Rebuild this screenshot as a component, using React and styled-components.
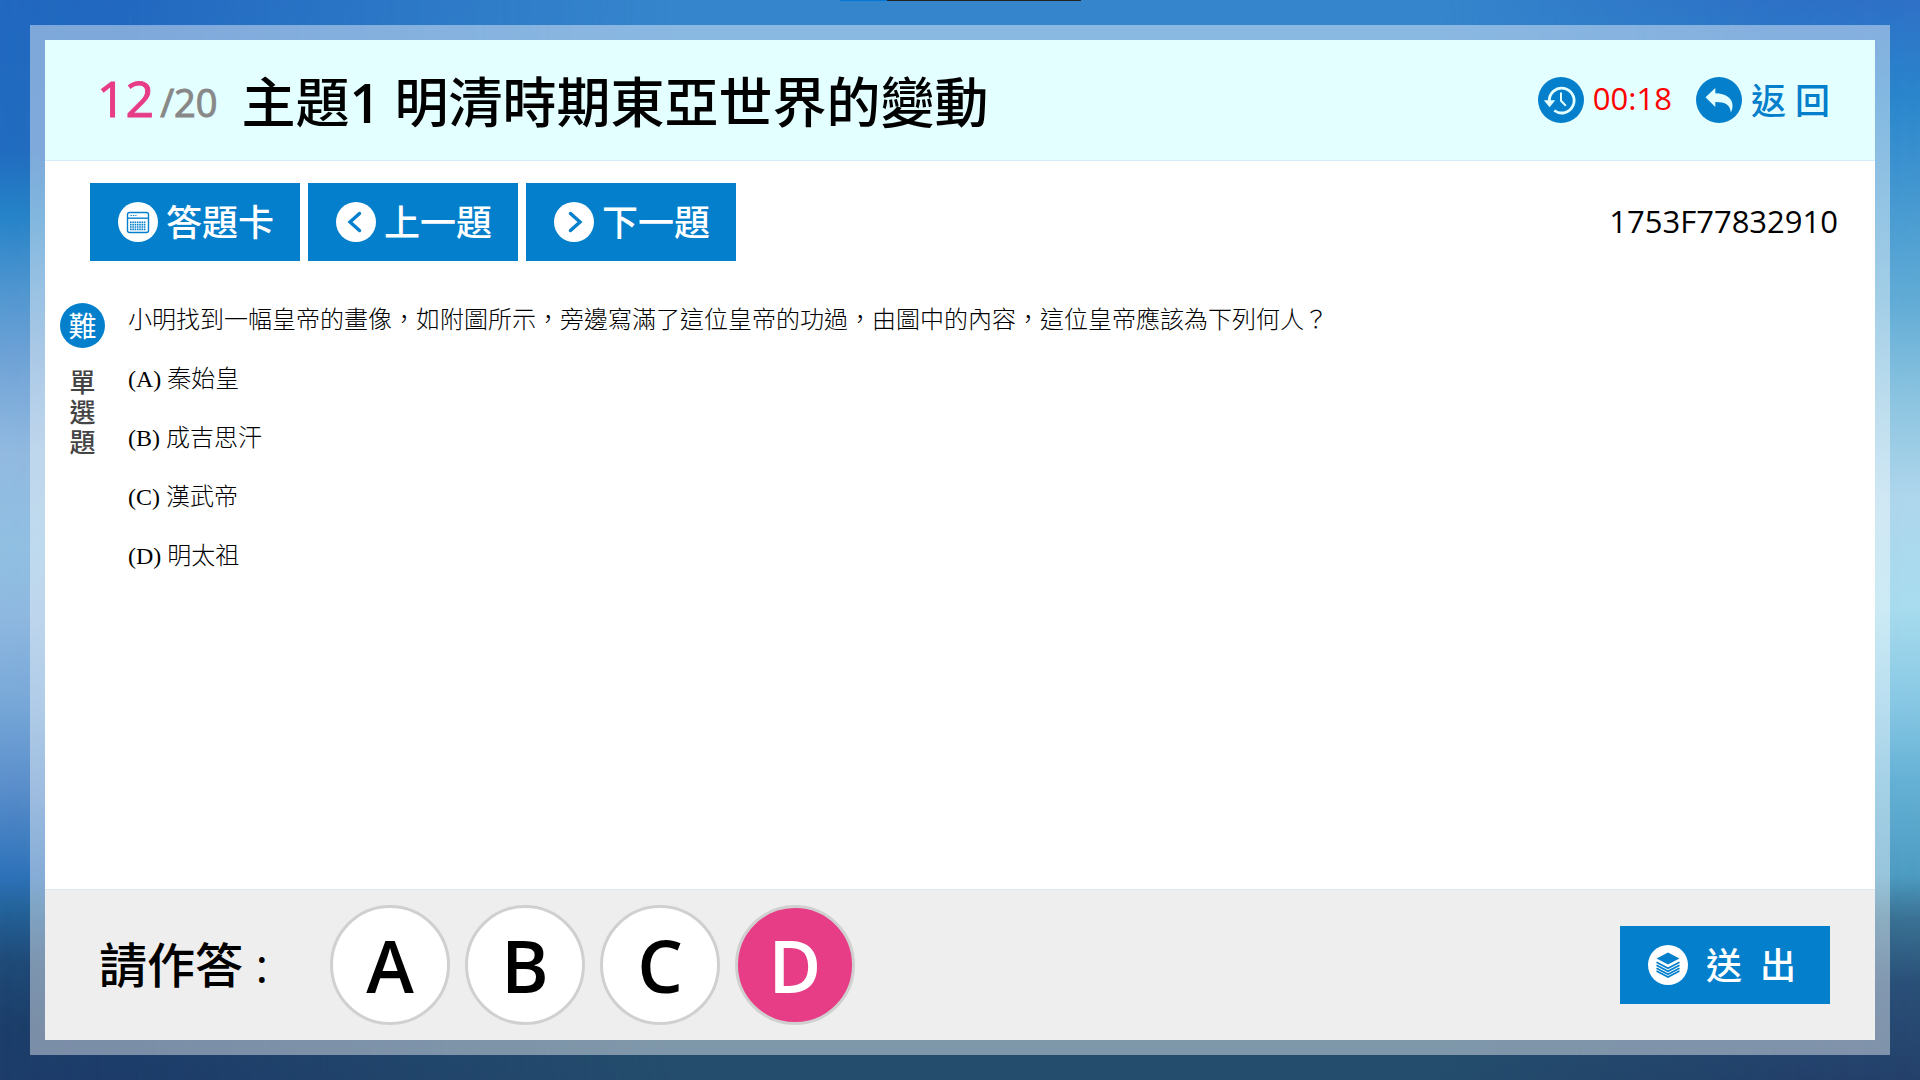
import React, { useState } from "react";
import styled, { createGlobalStyle, css } from "styled-components";

const CHOICES = ["A", "B", "C", "D"];

const OPTIONS = [
  { key: "A", text: "秦始皇" },
  { key: "B", text: "成吉思汗" },
  { key: "C", text: "漢武帝" },
  { key: "D", text: "明太祖" },
];

function CardIcon() {
  return (
    <svg width="40" height="40" viewBox="0 0 40 40" aria-hidden="true">
      <circle cx="20" cy="20" r="20" fill="#fff" />
      <rect x="9.5" y="10.5" width="21" height="20" rx="2" fill="none" stroke="#047fcc" strokeWidth="1.4" />
      <path d="M10 16.2h20" stroke="#047fcc" strokeWidth="1.4" />
      <path d="M12.5 13.5h6" stroke="#047fcc" strokeWidth="1.2" strokeDasharray="1.4 1" />
      <path d="M12 20.2h16M12 22.6h16M12 25h16M12 27.4h16" stroke="#047fcc" strokeWidth="1.6" strokeDasharray="1.6 0.7" />
    </svg>
  );
}

function ArrowIcon({ next }) {
  return (
    <svg width="40" height="40" viewBox="0 0 40 40" aria-hidden="true">
      <circle cx="20" cy="20" r="20" fill="#fff" />
      <path
        d={next ? "M16.5 11.5l9.5 8.5-9.5 8.5" : "M23.5 11.5l-9.5 8.5 9.5 8.5"}
        fill="none"
        stroke="#047fcc"
        strokeWidth="3.4"
        strokeLinecap="round"
      />
    </svg>
  );
}

function ClockIcon() {
  return (
    <svg width="46" height="46" viewBox="0 0 46 46" aria-hidden="true">
      <circle cx="23" cy="23" r="23" fill="#047fcc" />
      <path d="M11.3 24A12.4 12.4 0 1 1 16.3 33.5" fill="none" stroke="#e3ffff" strokeWidth="2.8" />
      <path d="M5.8 23.3h11.4l-5.6 7z" fill="#e3ffff" />
      <path d="M23 15.5v8.3l4.8 5" fill="none" stroke="#e3ffff" strokeWidth="2" />
    </svg>
  );
}

function BackIcon() {
  return (
    <svg width="46" height="46" viewBox="0 0 46 46" aria-hidden="true">
      <circle cx="23" cy="23" r="23" fill="#047fcc" />
      <path d="M9.5 20.2L19.3 11v5.2c10.5.3 17.2 5 17.2 12.2 0 3-.6 5-1.700 7-.3-7.600-5.500-10.600-15.500-10.500v5z" fill="#e3ffff" />
    </svg>
  );
}

function LayersIcon() {
  return (
    <svg width="40" height="40" viewBox="0 0 40 40" aria-hidden="true">
      <circle cx="20" cy="20" r="20" fill="#fff" />
      <path d="M20 7.5l11.5 6-11.5 6-11.5-6z" fill="#047fcc" />
      <path
        d="M8.5 17.3l11.5 6 11.5-6M8.5 20.3l11.5 6 11.5-6M8.5 23.3l11.5 6 11.5-6M8.5 26.1l11.5 6 11.5-6"
        fill="none"
        stroke="#047fcc"
        strokeWidth="1.7"
      />
    </svg>
  );
}

function App() {
  const [answer, setAnswer] = useState("D");

  return (
    <Page>
      <GlobalStyle />
      <TopTab />
      <Frame>
        <Header>
          <Counter>
            <strong>12</strong>
            <span>/20</span>
          </Counter>
          <Title>主題<b>1</b> 明清時期東亞世界的變動</Title>
          <Timer>
            <ClockIcon />
            <time>00:18</time>
          </Timer>
          <BackLink href="#back">
            <BackIcon />
            <span>返 回</span>
          </BackLink>
        </Header>
        <Toolbar>
          <BlueButton type="button"><CardIcon /><span>答題卡</span></BlueButton>
          <BlueButton type="button"><ArrowIcon /><span>上一題</span></BlueButton>
          <BlueButton type="button"><ArrowIcon next /><span>下一題</span></BlueButton>
          <Code>1753F77832910</Code>
        </Toolbar>
        <Main>
          <Side>
            <Level>難</Level>
            <Kind>單選題</Kind>
          </Side>
          <Question>
            <p>小明找到一幅皇帝的畫像，如附圖所示，旁邊寫滿了這位皇帝的功過，由圖中的內容，這位皇帝應該為下列何人？</p>
            {OPTIONS.map((o) => (
              <p key={o.key}>({o.key}) {o.text}</p>
            ))}
          </Question>
        </Main>
        <Footer>
          <Prompt>請作答 :</Prompt>
          <Choices>
            {CHOICES.map((c) => (
              <Choice key={c} type="button" $active={c === answer} aria-pressed={c === answer} onClick={() => setAnswer(c)}>
                {c}
              </Choice>
            ))}
          </Choices>
          <BlueButton type="submit" $wide><LayersIcon /><span>送{"\u2002"}出</span></BlueButton>
        </Footer>
      </Frame>
    </Page>
  );
}

const GlobalStyle = createGlobalStyle`
  * {
    box-sizing: border-box;
  }
  body {
    margin: 0;
    color: #000;
    font-family: "Open Sans", "Noto Sans CJK TC", sans-serif;
  }
`;

const Page = styled.div`
  position: relative;
  isolation: isolate;
  display: flex;
  flex-direction: column;
  min-height: 100vh;
  padding: 25px 30px;
  background: linear-gradient(
    #2168c0 0%, #216cc0 14%, #2683c8 20%, #5096d0 27%, #6ea2d6 33%, #92bae0 42%, #90bfe2 51%,
    #8fb8e0 57%, #78a8d8 65%, #5a8ecb 73%, #2e72ba 81%, #24649c 84%, #1f4a78 89%, #1c3e6a 95%, #1d3c6a 100%
  );
  &::before {
    content: "";
    position: absolute;
    inset: 0;
    z-index: -1;
    background: linear-gradient(
      #2e70c6 0%, #2a86cc 9%, #4498d0 18%, #62acd6 28%, #8cc4e0 37%, #aed6ec 46%, #a8dcee 56%,
      #88c8e4 65%, #66b2d6 72%, #4e9cc2 81%, #3a7294 85%, #2a5078 91%, #23406a 100%
    );
    mask-image: linear-gradient(90deg, transparent, #000);
  }
  &::after {
    content: "";
    position: absolute;
    inset: 0;
    z-index: -1;
    background: linear-gradient(#3585cc 0%, #3585cc 50%, #24506e 90%, #244c6c 100%);
    mask-image: linear-gradient(90deg, transparent 6%, #000 35%, #000 75%, transparent 94%);
  }
`;

const TopTab = styled.div`
  position: absolute;
  top: 0;
  left: 50%;
  width: 241px;
  height: 1px;
  margin-left: -120px;
  background: linear-gradient(90deg, #0078d7 47px, #222 47px);
`;

const Frame = styled.div`
  flex: 1;
  display: flex;
  flex-direction: column;
  border: 15px solid rgba(255, 255, 255, 0.42);
  background: #fff;
  background-clip: padding-box;
`;

const Header = styled.header`
  display: flex;
  align-items: center;
  height: 121px;
  padding: 0 45px 0 52px;
  border-bottom: 1px solid #d5ecfa;
  background: #e3ffff;
`;

const Counter = styled.div`
  display: flex;
  align-items: baseline;
  gap: 6px;
  padding-bottom: 4px;
  color: #888;
  font-size: 38px;
  strong {
    color: #e73c86;
    font-size: 50px;
    font-weight: 400;
    -webkit-text-stroke: 1px #e73c86;
  }
  span {
    -webkit-text-stroke: 1px #888;
  }
`;

const Title = styled.h1`
  flex: 1;
  margin: 0;
  padding: 3px 0 0 24px;
  font-size: 54px;
  font-weight: 500;
  line-height: 72px;
  b {
    font-weight: 600;
  }
`;

const Timer = styled.div`
  display: flex;
  align-items: center;
  gap: 9px;
  margin-right: 24px;
  color: #f00;
  font-size: 31px;
  time {
    padding-bottom: 4px;
  }
`;

const BackLink = styled.a`
  display: flex;
  align-items: center;
  gap: 9px;
  color: #047fcc;
  font-size: 35px;
  font-weight: 500;
  text-decoration: none;
  span {
    padding-bottom: 4px;
  }
`;

const Toolbar = styled.nav`
  display: flex;
  align-items: center;
  gap: 8px;
  padding: 22px 37px 22px 45px;
`;

const BlueButton = styled.button`
  display: flex;
  align-items: center;
  gap: ${(p) => (p.$wide ? "18px" : "8px")};
  width: 210px;
  height: 78px;
  padding: 0 0 0 28px;
  border: none;
  background: #047fcc;
  color: #fff;
  font-family: inherit;
  font-size: 36px;
  font-weight: 500;
  cursor: pointer;
  span {
    padding-bottom: 3px;
  }
`;

const Code = styled.div`
  margin-left: auto;
  padding-bottom: 2px;
  font-size: 31px;
`;

const Main = styled.main`
  flex: 1;
  display: flex;
  gap: 23px;
  padding: 20px 15px;
`;

const Side = styled.div`
  display: flex;
  flex-direction: column;
  align-items: center;
  width: 45px;
`;

const Level = styled.div`
  width: 45px;
  height: 45px;
  border-radius: 50%;
  background: #047fcc;
  color: #fff;
  font-size: 28px;
  line-height: 46px;
  text-align: center;
`;

const Kind = styled.div`
  width: 26px;
  margin-top: 19px;
  color: #444;
  font-size: 26px;
  font-weight: 500;
  line-height: 30px;
`;

const Question = styled.div`
  font-family: "Liberation Serif", "Noto Sans CJK TC", serif;
  font-size: 24px;
  font-weight: 300;
  line-height: 35px;
  p {
    margin: 0 0 24px;
  }
`;

const Footer = styled.footer`
  display: flex;
  align-items: center;
  height: 151px;
  padding: 0 45px 0 54px;
  border-top: 1px solid #dde6ec;
  background: #eee;
`;

const Prompt = styled.div`
  width: 231px;
  padding-bottom: 6px;
  font-size: 48px;
  font-weight: 500;
`;

const Choices = styled.div`
  flex: 1;
  display: flex;
  gap: 15px;
`;

const Choice = styled.button`
  width: 120px;
  height: 120px;
  padding: 0;
  border: 3px solid #d0d0d0;
  border-radius: 50%;
  background: #fff;
  color: #000;
  font-family: inherit;
  font-size: 72px;
  font-weight: 600;
  line-height: 72px;
  cursor: pointer;
  ${(p) =>
    p.$active &&
    css`
      background: #e73c86;
      color: #fff;
    `}
`;

export default App;
